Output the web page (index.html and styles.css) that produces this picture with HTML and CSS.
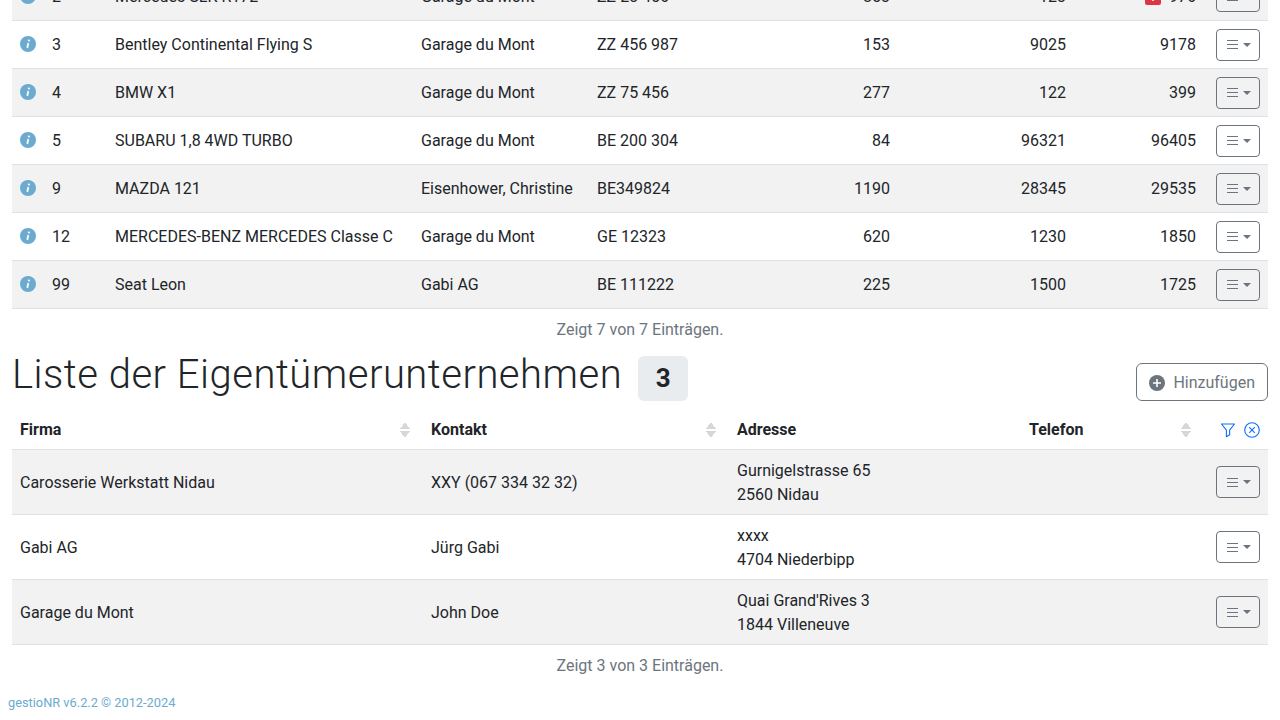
FILE: index.html
```html
<!DOCTYPE html>
<html lang="de">
<head>
    <meta charset="UTF-8">
    <title>gestioNR</title>
    <link rel="stylesheet" href="styles.css">
</head>
<body>
    <svg class="icon-defs" xmlns="http://www.w3.org/2000/svg">
        <symbol id="i-info" viewBox="0 0 16 16">
            <circle cx="8" cy="8" r="8" fill="#6caad0"/>
            <circle cx="8.9" cy="4.5" r="1.1" fill="#fff"/>
            <path d="M8.3 7 7.3 12" stroke="#fff" stroke-width="1.7" fill="none"/>
        </symbol>
        <symbol id="i-menu" viewBox="0 0 11 11">
            <path d="M0 1.5h11M0 5.5h11M0 9.5h11" stroke="#6c757d" stroke-width="1" fill="none"/>
        </symbol>
    </svg>

    <main class="page">
        <table class="data-table vehicles">
            <colgroup>
                <col class="c-icon"><col class="c-id"><col class="c-name"><col class="c-owner"><col class="c-plate">
                <col class="c-num1"><col class="c-num2"><col class="c-num3"><col class="c-act">
            </colgroup>
            <tbody>
                <tr class="striped">
                    <td class="info-cell"><svg class="info"><use href="#i-info"/></svg></td>
                    <td>2</td><td>Mercedes SLK R172</td><td>Garage du Mont</td><td>ZZ 23 456</td>
                    <td class="num">853</td><td class="num">123</td>
                    <td class="num"><span class="alert">!</span>976</td>
                    <td class="act"><button class="menu-btn"><svg class="menu-icon"><use href="#i-menu"/></svg><span class="caret"></span></button></td>
                </tr>
                <tr>
                    <td class="info-cell"><svg class="info"><use href="#i-info"/></svg></td>
                    <td>3</td><td>Bentley Continental Flying S</td><td>Garage du Mont</td><td>ZZ 456 987</td>
                    <td class="num">153</td><td class="num">9025</td><td class="num">9178</td>
                    <td class="act"><button class="menu-btn"><svg class="menu-icon"><use href="#i-menu"/></svg><span class="caret"></span></button></td>
                </tr>
                <tr class="striped">
                    <td class="info-cell"><svg class="info"><use href="#i-info"/></svg></td>
                    <td>4</td><td>BMW X1</td><td>Garage du Mont</td><td>ZZ 75 456</td>
                    <td class="num">277</td><td class="num">122</td><td class="num">399</td>
                    <td class="act"><button class="menu-btn"><svg class="menu-icon"><use href="#i-menu"/></svg><span class="caret"></span></button></td>
                </tr>
                <tr>
                    <td class="info-cell"><svg class="info"><use href="#i-info"/></svg></td>
                    <td>5</td><td>SUBARU 1,8 4WD TURBO</td><td>Garage du Mont</td><td>BE 200 304</td>
                    <td class="num">84</td><td class="num">96321</td><td class="num">96405</td>
                    <td class="act"><button class="menu-btn"><svg class="menu-icon"><use href="#i-menu"/></svg><span class="caret"></span></button></td>
                </tr>
                <tr class="striped">
                    <td class="info-cell"><svg class="info"><use href="#i-info"/></svg></td>
                    <td>9</td><td>MAZDA 121</td><td>Eisenhower, Christine</td><td>BE349824</td>
                    <td class="num">1190</td><td class="num">28345</td><td class="num">29535</td>
                    <td class="act"><button class="menu-btn"><svg class="menu-icon"><use href="#i-menu"/></svg><span class="caret"></span></button></td>
                </tr>
                <tr>
                    <td class="info-cell"><svg class="info"><use href="#i-info"/></svg></td>
                    <td>12</td><td>MERCEDES-BENZ MERCEDES Classe C</td><td>Garage du Mont</td><td>GE 12323</td>
                    <td class="num">620</td><td class="num">1230</td><td class="num">1850</td>
                    <td class="act"><button class="menu-btn"><svg class="menu-icon"><use href="#i-menu"/></svg><span class="caret"></span></button></td>
                </tr>
                <tr class="striped">
                    <td class="info-cell"><svg class="info"><use href="#i-info"/></svg></td>
                    <td>99</td><td>Seat Leon</td><td>Gabi AG</td><td>BE 111222</td>
                    <td class="num">225</td><td class="num">1500</td><td class="num">1725</td>
                    <td class="act"><button class="menu-btn"><svg class="menu-icon"><use href="#i-menu"/></svg><span class="caret"></span></button></td>
                </tr>
            </tbody>
        </table>
        <p class="table-info">Zeigt 7 von 7 Einträgen.</p>

        <div class="section-head">
            <h1>Liste der Eigentümerunternehmen<span class="count">3</span></h1>
            <button class="add-btn">
                <svg class="add-icon" viewBox="0 0 16 16">
                    <circle cx="8" cy="8" r="8" fill="#6c757d"/>
                    <path d="M8 4v8M4 8h8" stroke="#fff" stroke-width="1.6"/>
                </svg>
                Hinzufügen
            </button>
        </div>

        <table class="data-table companies">
            <colgroup>
                <col class="c-firma"><col class="c-kontakt"><col class="c-adresse"><col class="c-telefon"><col class="c-act">
            </colgroup>
            <thead>
                <tr>
                    <th class="sortable">Firma</th>
                    <th class="sortable">Kontakt</th>
                    <th>Adresse</th>
                    <th class="sortable">Telefon</th>
                    <th class="tools">
                        <svg class="tool" viewBox="0 0 16 16" fill="none" stroke="#0d6efd" stroke-width="1.1">
                            <path d="M1.5 2h13L9.6 8.2v4.6l-3.2 1.9V8.2z" stroke-linejoin="round"/>
                        </svg>
                        <svg class="tool" viewBox="0 0 16 16" fill="none" stroke="#0d6efd" stroke-width="1.1">
                            <circle cx="8" cy="8" r="7.3"/>
                            <path d="M5.2 5.2l5.6 5.6M10.8 5.2l-5.6 5.6"/>
                        </svg>
                    </th>
                </tr>
            </thead>
            <tbody>
                <tr class="striped">
                    <td>Carosserie Werkstatt Nidau</td><td>XXY (067 334 32 32)</td>
                    <td>Gurnigelstrasse 65<br>2560 Nidau</td><td></td>
                    <td class="act"><button class="menu-btn"><svg class="menu-icon"><use href="#i-menu"/></svg><span class="caret"></span></button></td>
                </tr>
                <tr>
                    <td>Gabi AG</td><td>Jürg Gabi</td>
                    <td>xxxx<br>4704 Niederbipp</td><td></td>
                    <td class="act"><button class="menu-btn"><svg class="menu-icon"><use href="#i-menu"/></svg><span class="caret"></span></button></td>
                </tr>
                <tr class="striped">
                    <td>Garage du Mont</td><td>John Doe</td>
                    <td>Quai Grand'Rives 3<br>1844 Villeneuve</td><td></td>
                    <td class="act"><button class="menu-btn"><svg class="menu-icon"><use href="#i-menu"/></svg><span class="caret"></span></button></td>
                </tr>
            </tbody>
        </table>
        <p class="table-info">Zeigt 3 von 3 Einträgen.</p>

        <footer class="app-footer">gestioNR v6.2.2 © 2012-2024</footer>
    </main>
</body>
</html>
```

FILE: styles.css
```css
* {
    box-sizing: border-box;
}

html, body {
    margin: 0;
    padding: 0;
    height: 720px;
    overflow: hidden;
    background: #fff;
}

body {
    font-family: Roboto, sans-serif;
    font-size: 16px;
    line-height: 24px;
    color: #212529;
}

.icon-defs {
    display: none;
}

.page {
    padding: 0 12px;
}

/* Tables */
.data-table {
    width: 1256px;
    border-collapse: collapse;
    table-layout: fixed;
}

.vehicles {
    margin-top: -28px;
}

.data-table td,
.data-table th {
    padding: 0 8px;
    border-bottom: 1px solid #dee2e6;
    vertical-align: middle;
    text-align: left;
    white-space: nowrap;
}

.data-table td {
    padding-top: 2px;
}

.vehicles td {
    height: 48px;
}

.companies td {
    height: 65px;
}

.companies th {
    height: 38px;
    font-weight: 700;
    position: relative;
}

.striped td {
    background: #f2f2f2;
}

.data-table .num {
    text-align: right;
}

.data-table .act {
    text-align: right;
    padding-top: 1px;
}

.data-table .info-cell {
    padding-top: 0;
}

.companies .act {
    padding-top: 0;
}

.c-icon { width: 32px; }
.c-id { width: 63px; }
.c-name { width: 306px; }
.c-owner { width: 176px; }
.c-plate { width: 163px; }
.c-num1 { width: 146px; }
.c-num2 { width: 176px; }
.c-num3 { width: 130px; }
.c-act { width: 64px; }

.c-firma { width: 411px; }
.c-kontakt { width: 306px; }
.c-adresse { width: 292px; }
.c-telefon { width: 183px; }

.info {
    display: block;
    width: 16px;
    height: 16px;
}

.alert {
    display: inline-block;
    width: 16px;
    height: 15px;
    margin-right: 8px;
    border-radius: 2px;
    background: #dc3545;
    color: #fff;
    font-size: 11px;
    font-weight: 700;
    line-height: 15px;
    text-align: center;
    vertical-align: middle;
}

/* Buttons */
.menu-btn {
    display: inline-flex;
    align-items: center;
    justify-content: center;
    gap: 5px;
    width: 44px;
    height: 32px;
    padding: 0 0 0 2px;
    vertical-align: middle;
    background: transparent;
    border: 1px solid #6c757d;
    border-radius: 4px;
}

.menu-icon {
    width: 11px;
    height: 11px;
}

.caret {
    width: 0;
    height: 0;
    border-top: 4px solid #6c757d;
    border-left: 4px solid transparent;
    border-right: 4px solid transparent;
}

.add-btn {
    display: flex;
    align-items: center;
    gap: 8px;
    height: 38px;
    padding: 2px 12px 0;
    background: #fff;
    border: 1px solid #6c757d;
    border-radius: 6px;
    color: #6c757d;
    font: inherit;
}

.add-icon {
    width: 16px;
    height: 16px;
}

/* Section heading */
.section-head {
    display: flex;
    justify-content: space-between;
    align-items: flex-end;
    height: 63px;
    padding-bottom: 11px;
}

.section-head h1 {
    display: flex;
    align-items: flex-end;
    margin: 0;
    padding-bottom: 2px;
    font-size: 40px;
    line-height: 48px;
    font-weight: 300;
    letter-spacing: 0.5px;
}

.count {
    display: block;
    width: 50px;
    height: 45px;
    margin-left: 16px;
    margin-bottom: -2px;
    border-radius: 6px;
    background: #e9ecef;
    font-size: 26px;
    line-height: 45px;
    font-weight: 700;
    letter-spacing: 0;
    text-align: center;
}

/* Sort arrows in table header */
.sortable::after {
    content: "";
    position: absolute;
    right: 13px;
    top: 10px;
    width: 10px;
    height: 16px;
    background:
        linear-gradient(to top left, #d5d7da 50%, transparent 50%) left top / 5px 7px no-repeat,
        linear-gradient(to top right, #d5d7da 50%, transparent 50%) right top / 5px 7px no-repeat,
        linear-gradient(to bottom left, #d5d7da 50%, transparent 50%) left bottom / 5px 7px no-repeat,
        linear-gradient(to bottom right, #d5d7da 50%, transparent 50%) right bottom / 5px 7px no-repeat;
}

.data-table .tools {
    text-align: right;
    font-size: 0;
}

.tools .tool {
    width: 16px;
    height: 16px;
    margin-left: 8px;
    vertical-align: middle;
}

.table-info {
    margin: 0;
    padding: 9px 0 7px;
    text-align: center;
    color: #6c757d;
}

.app-footer {
    margin: 8px 0 0 -4px;
    font-size: 12.8px;
    line-height: 20px;
    color: #6caad0;
}
```
